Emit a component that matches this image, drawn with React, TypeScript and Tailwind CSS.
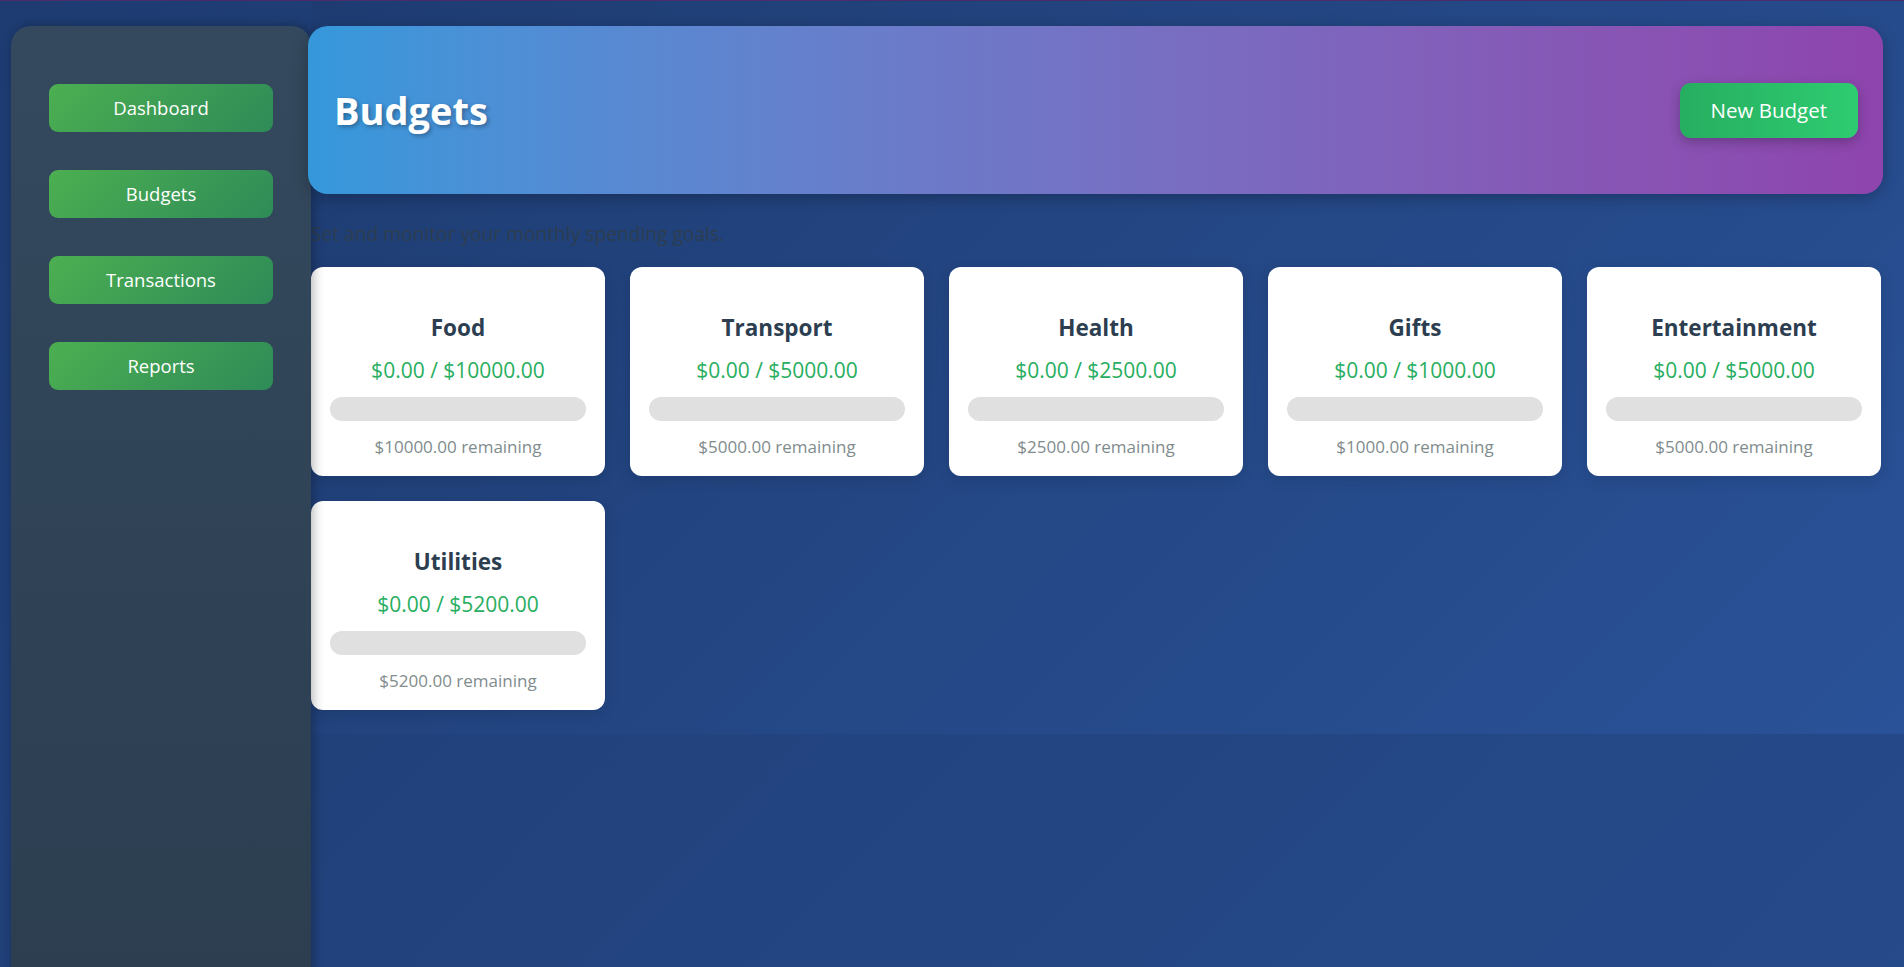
const navItems = ["Dashboard", "Budgets", "Transactions", "Reports"];

const budgets = [
  { name: "Food", limit: 10000 },
  { name: "Transport", limit: 5000 },
  { name: "Health", limit: 2500 },
  { name: "Gifts", limit: 1000 },
  { name: "Entertainment", limit: 5000 },
  { name: "Utilities", limit: 5200 },
];

function BudgetCard({ name, limit }: { name: string; limit: number }) {
  const spent = 0;
  return (
    <div className="flex flex-col items-center rounded-[12px] bg-white px-[19px] pb-[17px] pt-[47px] shadow-[0_4px_15px_rgba(0,0,0,0.12)]">
      <h3 className="text-[22.5px] font-bold leading-[28px] text-[#2c3e50]">{name}</h3>
      <p className="mt-[15px] text-[21px] leading-[26px] text-[#27ae60]">
        ${spent.toFixed(2)} / ${limit.toFixed(2)}
      </p>
      <div className="mt-[14px] h-[24px] w-full rounded-full bg-[#e0e0e0]" />
      <p className="mt-[14px] text-[17px] leading-[24px] text-[#7f8c8d]">
        ${(limit - spent).toFixed(2)} remaining
      </p>
    </div>
  );
}

export default function App() {
  return (
    <div className="flex min-h-screen border-t border-[#4b2c6b] bg-linear-135 from-[#1e3c72] to-[#2a5298] bg-[length:100%_2500px] bg-no-repeat font-['Segoe_UI','Open_Sans',sans-serif]">
      <aside className="relative z-10 ml-[11px] mt-[25px] h-screen w-[300px] shrink-0 rounded-t-[20px] bg-linear-to-b from-[#34495e] to-[#2c3e50] px-[38px] pt-[58px] shadow-[2px_0_12px_rgba(0,0,0,0.3)]">
        <nav className="flex flex-col gap-[38px]">
          {navItems.map((item) => (
            <a
              key={item}
              href="#"
              className="flex h-[48px] items-center justify-center rounded-[9px] bg-linear-135 from-[#4caf50] to-[#2e8b57] text-[18.5px] text-white"
            >
              {item}
            </a>
          ))}
        </nav>
      </aside>

      <main className="flex-1 self-start bg-linear-135 from-[#1e3c72] to-[#2a5298] pb-[24px] pr-[23px] pt-[25px]">
        <header className="relative z-20 -ml-[3px] mr-[-2px] flex h-[168px] items-center justify-between rounded-[20px] bg-linear-to-r from-[#3498db] to-[#8e44ad] pl-[26px] pr-[25px] shadow-[0_4px_15px_rgba(0,0,0,0.25)]">
          <h1 className="text-[38px] font-bold text-white [text-shadow:2px_2px_4px_rgba(0,0,0,0.3)]">Budgets</h1>
          <button className="h-[55px] rounded-[11px] bg-linear-to-r from-[#27ae60] to-[#2ecc71] px-[31px] text-[20.5px] text-white shadow-[0_4px_12px_rgba(0,0,0,0.25)]">
            New Budget
          </button>
        </header>

        <p className="mt-[28px] text-[19.2px] leading-[24px] text-[#2c3e50]">Set and monitor your monthly spending goals.</p>

        <div className="mt-[21px] grid grid-cols-5 gap-[25px]">
          {budgets.map((b) => (
            <BudgetCard key={b.name} name={b.name} limit={b.limit} />
          ))}
        </div>
      </main>
    </div>
  );
}
